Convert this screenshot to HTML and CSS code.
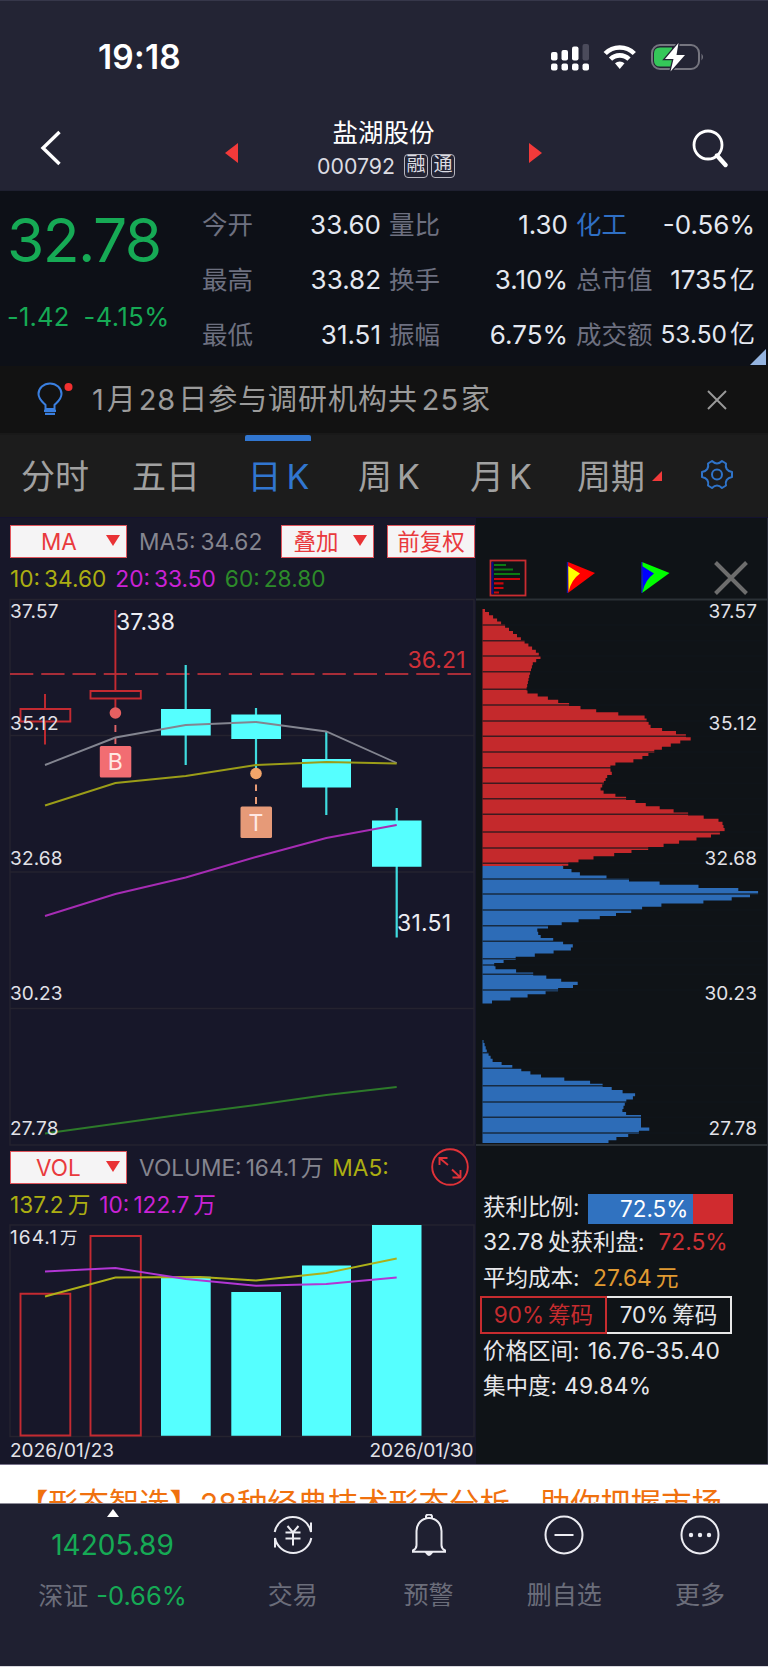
FILE: index.html
```html
<!DOCTYPE html>
<html lang="zh-CN">
<head>
<meta charset="utf-8">
<title>盐湖股份 000792</title>
<link rel="stylesheet" href="styles.css">
</head>
<body>
<div class="app">
  <header class="top">
    <div class="status">
      <span class="time">19:18</span>
      <svg class="status-icons" width="156" height="30" viewBox="0 0 156 30">
        <g fill="#fff">
          <rect x="1" y="10" width="6.5" height="8.5" rx="2"/><rect x="11.500" y="8" width="6.500" height="10.500" rx="2"/><rect x="22" y="4.500" width="6.500" height="14" rx="2"/>
          <rect x="32.500" y="2" width="6.500" height="16.500" rx="2" fill="#4b4b5b"/>
          <rect x="1" y="21.500" width="6.500" height="7" rx="2"/><rect x="11.500" y="21.500" width="6.500" height="7" rx="2"/><rect x="22" y="21.500" width="6.500" height="7" rx="2"/><rect x="32.500" y="21.500" width="6.500" height="7" rx="2"/>
          <path d="M65 21.300a7 7 0 0 1 9.500 0L69.750 27z"/>
        </g>
        <path d="M55.200 11.500a20.500 20.500 0 0 1 29.100 0M60.500 17.200a13 13 0 0 1 18.500 0" fill="none" stroke="#fff" stroke-width="4.600"/>
        <rect x="102" y="3" width="47" height="24" rx="8" fill="none" stroke="#75757f" stroke-width="2"/>
        <path d="M151.500 11.500q3 3.500 0 7z" fill="#75757f"/>
        <path d="M110 5.500h12v19h-12q-6 0-6-6v-7q0-6 6-6z" fill="#35c759"/>
        <path d="M128.500 1 115 17h8.500l-3 12.500L135 13h-8.500z" fill="#fff" stroke="#232434" stroke-width="2.600" paint-order="stroke"/>
      </svg>
    </div>
    <div class="nav">
      <svg class="back" width="24" height="38" viewBox="0 0 24 38"><path d="M20.500 3 4 19l16.500 16" fill="none" stroke="#fff" stroke-width="3.400"/></svg>
      <svg class="prev" width="13" height="20" viewBox="0 0 13 20"><path d="M13 0v20L0 10z" fill="#f23a3a"/></svg>
      <div class="title">
        <h1>盐湖股份</h1>
        <div class="code"><span>000792</span><i>融</i><i>通</i></div>
      </div>
      <svg class="next" width="13" height="20" viewBox="0 0 13 20"><path d="M0 0v20l13-10z" fill="#f23a3a"/></svg>
      <svg class="search" width="38" height="40" viewBox="0 0 38 40"><circle cx="17" cy="17" r="14" fill="none" stroke="#fff" stroke-width="2.800"/><path d="M26 27.500 34.500 37" stroke="#fff" stroke-width="4.400" stroke-linecap="round"/></svg>
    </div>
  </header>

  <section class="quote">
    <div class="price"><b>32.78</b><p><span>-1.42</span><span>-4.15%</span></p></div>
    <dl class="col c1"><div><dt>今开</dt><dd>33.60</dd></div><div><dt>最高</dt><dd>33.82</dd></div><div><dt>最低</dt><dd>31.51</dd></div></dl>
    <dl class="col c2"><div><dt>量比</dt><dd>1.30</dd></div><div><dt>换手</dt><dd>3.10%</dd></div><div><dt>振幅</dt><dd>6.75%</dd></div></dl>
    <dl class="col c3"><div><dt class="blue">化工</dt><dd>-0.56%</dd></div><div><dt>总市值</dt><dd>1735<em>亿</em></dd></div><div><dt>成交额</dt><dd class="small">53.50<em>亿</em></dd></div></dl>
    <svg class="corner" width="16" height="16" viewBox="0 0 16 16"><path d="M16 0v16H0z" fill="#94b4e0"/></svg>
  </section>

  <section class="notice">
    <svg width="40" height="36" viewBox="0 0 40 36"><path d="M10.500 27v-4C7 19.500 3.500 17 3.500 12a11.500 10.500 0 0 1 23 0c0 5-3.500 7.500-7 11v4z" fill="none" stroke="#3a7fe0" stroke-width="2"/><path d="M9 28.800h12M10 31.800h10" stroke="#3a7fe0" stroke-width="2.200"/><circle cx="33.500" cy="5" r="4" fill="#f23030"/></svg>
    <p>1<s></s>月<s></s>28<s></s>日参与调研机构共<s class="w"></s>25<s></s>家</p>
    <svg class="x" width="20" height="20" viewBox="0 0 20 20"><path d="M1 1l18 18M19 1 1 19" stroke="#9a9a9a" stroke-width="1.900"/></svg>
  </section>

  <nav class="tabs">
    <a>分时</a><a>五日</a><a class="on">日<s></s>K</a><a>周<s></s>K</a><a>月<s></s>K</a><a>周期</a>
    <svg class="tri" width="10" height="10" viewBox="0 0 10 10"><path d="M10 0v10H0z" fill="#f23a3a"/></svg>
    <svg class="gear" width="34" height="32" viewBox="0 0 34 32" fill="none" stroke="#2f73c8" stroke-width="2" stroke-linejoin="round"><path d="M12 2Q17 7 22 2L26 4.500Q24.500 11.500 32 13V18Q24.500 19.500 26 26.500L22 29Q17 24 12 29L8 26.500Q9.500 19.500 2 18V13Q9.500 11.500 8 4.500Z"/><circle cx="17" cy="15.500" r="5"/></svg>
  </nav>

  <main class="charts">
    <section class="left">
      <div class="legend">
        <div class="line"><button class="sel ma">MA<i></i></button><span class="gray ma5">MA5:<s></s>34.62</span><button class="sel add">叠加<i></i></button><button class="sel adj">前复权</button></div>
        <div class="line two"><span class="yellow">10:<s></s>34.60</span><span class="mag">20:<s></s>33.50</span><span class="green">60:<s></s>28.80</span></div>
      </div>
      <svg class="kline" width="476" height="548" viewBox="0 598 476 548">
        <g fill="none" stroke="#25232f" stroke-width="1.500"><path d="M10 599.500H474V1145H10zM10 735.500H474M10 872H474M10 1008.500H474"/></g>
        <path d="M10 674H471" stroke="#a82d38" stroke-width="2" stroke-dasharray="23.300 7.950"/>
        <g fill="none" stroke="#c42a31" stroke-width="1.900"><path d="M20.500 709H70.300V721.500H20.500zM45 694V709M45 721.500V744.500M90.500 691H140.800V698.500H90.500zM115.400 610V691M115.400 698.500V713"/><path d="M115.400 725v7M115.400 737v7" stroke="#e06468"/></g>
        <path d="M185.700 665V765M256 708V773M326.300 732V815M396.700 808V937.500" stroke="#3fdcdf" stroke-width="2.200"/>
        <g fill="#55ffff"><path d="M161 709h49.700v26.500H161zM231.300 714.500H281v24.500h-49.700zM302 759h49v28.500h-49zM372 820.500h49.500v46.300H372z"/></g>
        <path d="M256 784.500v6.500M256 797v7" stroke="#e89b76" stroke-width="2"/>
        <g fill="none" stroke-width="1.900">
          <path d="M45 765 115.400 737.500 185.700 725 256 722 326.300 731.500 396.700 763" stroke="#838590"/>
          <path d="M45 805.500 115.400 783 185.700 776 256 765 326.300 762 396.700 763.500" stroke="#9b9d18"/>
          <path d="M45 916 115.400 894 185.700 877.500 256 857 326.300 838 396.700 825" stroke="#a62cb4"/>
          <path d="M45 1133.500 115.400 1123.700 185.700 1114 256 1105 326.300 1095 396.700 1087" stroke="#2d7a2a"/>
        </g>
        <circle cx="115.400" cy="713" r="5.800" fill="#e66061"/><circle cx="256" cy="773.500" r="5.800" fill="#f2a56a"/>
        <rect x="99.800" y="746" width="31.500" height="31.500" rx="1.500" fill="#f26d72"/><rect x="240.500" y="806.500" width="31.500" height="31.500" rx="1.500" fill="#e69a78"/>
        <g class="mark"><text x="115.400" y="770">B</text><text x="256" y="830.500">T</text></g>
        <g class="axis"><text x="10" y="618" textLength="48.500">37.57</text><text x="10" y="730" textLength="48.500">35.12</text><text x="10" y="865" textLength="52.500">32.68</text><text x="10" y="1000" textLength="52.500">30.23</text><text x="10" y="1135" textLength="48.500">27.78</text></g>
        <g class="val"><text x="116" y="630" textLength="59">37.38</text><text x="397" y="931" textLength="54">31.51</text><text x="407.500" y="668" textLength="58" fill="#d03038">36.21</text></g>
      </svg>
      <div class="legend vol">
        <div class="line"><button class="sel ma">VOL<i></i></button><span class="gray vm">VOLUME:<s></s>164.1<s></s>万</span><span class="yellow m5">MA5:</span>
          <svg class="expand" width="38" height="38" viewBox="0 0 38 38" fill="none" stroke="#e03238" stroke-width="1.900"><circle cx="19" cy="19" r="17.800"/><path d="M17 17 8.500 10M8.500 17V10H16.500M21 21.500l8 7.500M21.500 29.500h8V22"/></svg></div>
        <div class="line two"><span class="yellow v1">137.2<s></s>万</span><span class="mag v2">10:<s></s>122.7<s></s>万</span></div>
      </div>
      <svg class="volume" width="476" height="241" viewBox="0 1223 476 241">
        <path d="M10 1225H474V1436.500H10z" fill="none" stroke="#25232f" stroke-width="1.500"/>
        <path d="M20.500 1293.700H70.300V1435.500H20.500zM90.500 1236H140.800V1435.500H90.500z" fill="none" stroke="#c42a31" stroke-width="1.900"/>
        <path d="M161 1276.700h49.700v159H161zM231.300 1292H281v143.700h-49.700zM302 1265.500h49v170.200h-49zM372 1225h49.500v210.700H372z" fill="#55ffff"/>
        <g fill="none" stroke-width="1.900"><path d="M45 1296.500 115.400 1277.500 200 1277 256 1280.500 326.300 1273 396.700 1258.500" stroke="#adb019"/><path d="M45 1271.500 115.400 1268 185.700 1279 256 1285.700 326.300 1284 396.700 1277.500" stroke="#b236d4"/></g>
        <g class="axis"><text x="10" y="1243.500" textLength="47">164.1</text><text x="60" y="1243.500" font-size="17.500">万</text></g>
        <g class="axis date"><text x="10" y="1457" textLength="104">2026/01/23</text><text x="369.500" y="1457" textLength="104">2026/01/30</text></g>
      </svg>
    </section>

    <section class="right">
      <svg class="chips" width="292" height="629" viewBox="476 518 292 629">
        <rect x="490.500" y="560.500" width="35" height="35" fill="none" stroke="#c92c31" stroke-width="1.800"/>
        <path d="M492.500 562V594" stroke="#0a0a85" stroke-width="2"/>
        <path d="M494 565h12M494 569.500h19M494 574h26" stroke="#0c7a12" stroke-width="2.200"/><path d="M494 579h26M494 583.300h9.500M494 588h9.500M494 592.500h5" stroke="#c9060c" stroke-width="2.200"/>
        <path d="M568 562 595 573 568 593z" fill="#f00"/><path d="M568 566 580 573.500Q571 580 568.500 592z" fill="#ff0"/><path d="M567.500 562v31" stroke="#1616a0" stroke-width="1.400"/>
        <path d="M642 562 669.500 573 642 593z" fill="#0f0"/><path d="M642 566 654 573.500Q645 580 642.500 592z" fill="#00f"/><path d="M641.800 562v31" stroke="#1616a0" stroke-width="1.400"/>
        <path d="M715.500 562.500 746.500 593.500M746.500 562.500 715.500 593.500" stroke="#6d6d6d" stroke-width="4"/>
        <path d="M476 599.500h292M476 1145h292" stroke="#2b3136" stroke-width="2"/>
        <path id="chip-red" fill="#c4292c"/><path id="chip-blue" fill="#2d6cb7"/>
        <path id="chip-lines" stroke="#10151b" stroke-opacity=".75" stroke-width="1.600"/>
        <g class="axis"><text x="708.500" y="617.800" textLength="48.500">37.57</text><text x="708.500" y="730" textLength="48.500">35.12</text><text x="704.500" y="865" textLength="52.500">32.68</text><text x="704.500" y="1000" textLength="52.500">30.23</text><text x="708.500" y="1135" textLength="48.500">27.78</text></g>
      </svg>
      <div class="cost">
        <p><span class="lb">获利比例:</span><span class="ratio"><b>72.5%</b><u></u></span></p>
        <p><span class="num">32.78</span><s></s>处获利盘:<span class="num red">72.5%</span></p>
        <p><span class="lb">平均成本:</span><span class="num orange">27.64<s></s>元</span></p>
        <div class="switch"><span class="on">90%<s></s>筹码</span><span>70%<s></s>筹码</span></div>
        <p><span class="lb">价格区间:</span><span class="num range">16.76-35.40</span></p>
        <p><span>集中度:</span><span class="num conc">49.84%</span></p>
      </div>
    </section>
  </main>

  <section class="banner"><p>【形态智选】28种经典技术形态分析，助你把握市场</p></section>

  <footer class="bottom">
    <div class="index"><svg width="12" height="8" viewBox="0 0 12 8"><path d="M6 0l6 8H0z" fill="#fff"/></svg><b>14205.89</b><p>深证<span>-0.66%</span></p></div>
    <a><svg width="42" height="42" viewBox="0 0 42 42" fill="none" stroke="#ececf2" stroke-width="2"><path d="M2.700 18A18.500 18.500 0 0 1 39 18V8.500M39.300 24A18.500 18.500 0 0 1 3 24V33.500M15.500 12 21 18.500 26.500 12M21 18v13.500M13.500 18.500h15M13.500 24.500h15"/></svg>交易</a>
    <a><svg width="42" height="42" viewBox="0 0 42 42" fill="none" stroke="#ececf2" stroke-width="2"><path d="M5 37.800v-1.500q3.500-1.500 3.500-5V17a12.500 13 0 0 1 25 0v14.300q0 3.500 3.500 5v1.500zM18 5V2.500q0-2 3-2t3 2V5"/><path d="M18.500 39h5q-2.500 4-5 0z" fill="#ececf2"/></svg>预警</a>
    <a><svg width="42" height="42" viewBox="0 0 42 42" fill="none" stroke="#ececf2" stroke-width="2"><circle cx="21" cy="21" r="18.500"/><path d="M11.500 21h19"/></svg>删自选</a>
    <a><svg width="42" height="42" viewBox="0 0 42 42" fill="none" stroke="#ececf2" stroke-width="2"><circle cx="21" cy="21" r="18.500"/><g fill="#ececf2" stroke="none"><circle cx="12" cy="21" r="2.200"/><circle cx="21" cy="21" r="2.200"/><circle cx="30" cy="21" r="2.200"/></g></svg>更多</a>
  </footer>
</div>
<script src="chips.js"></script>
</body>
</html>
```
FILE: styles.css
```css
* { box-sizing: border-box; margin: 0; padding: 0; }
body { width: 768px; background: #1f2031; font-family: Inter, "Noto Sans CJK SC", sans-serif; color: #e6e6ea; }
svg { display: block; flex: none; }
s { display: inline-block; width: 5px; text-decoration: none; }
i, em { font-style: normal; }
.app { width: 768px; height: 1667px; overflow: hidden; display: flex; flex-direction: column; white-space: nowrap; border-bottom: 1px solid #d8d8de; }
.app > * { flex: none; }

.top { height: 191px; background: #232434; border-top: 1px solid #36374a; border-bottom: 1px solid #1e2030; }
.status { height: 111px; display: flex; padding: 40px 62px 0 98px; justify-content: space-between; }
.time { font-size: 33.500px; line-height: 32px; font-weight: 600; color: #fff; letter-spacing: .2px; }
.status-icons { margin-top: 1px; }
.nav { display: flex; height: 78px; }
.back { margin: 17px 0 0 39px; }
.prev { margin: 31px 0 0 162px; }
.title { width: 291px; text-align: center; color: #fff; }
.title h1 { font-size: 25.500px; line-height: 34px; font-weight: 400; margin-top: 4px; }
.code { display: flex; justify-content: center; margin-top: 4px; padding-left: 8px; font-size: 21.300px; line-height: 24px; color: #dcdce2; }
.code span { margin-right: 9px; }
.code i { width: 24px; height: 24px; border: 1.500px solid #b7b7c0; border-radius: 4px; font-size: 19px; line-height: 20px; margin-right: 3px; }
.next { margin-top: 31px; }
.search { margin: 16px 0 0 149px; }

.quote { height: 175px; background: #0d1017; display: flex; position: relative; }
.price { width: 202px; padding-left: 7px; color: #16aa55; }
.price b { display: block; font-weight: 400; font-size: 60.500px; line-height: 70px; margin-top: 14px; letter-spacing: -1.600px; }
.price p { font-size: 25.500px; line-height: 30px; margin-top: 27px; display: flex; gap: 14px; }
.price p span { letter-spacing: .2px; }
.price p span + span { letter-spacing: .5px; }
.col { padding-top: 6px; }
.col div { display: flex; justify-content: space-between; height: 55px; line-height: 55px; align-items: center; }
.c1, .c2, .c3 { width: 179px; }
.c2, .c3 { margin-left: 8px; }
dt { font-size: 25.500px; color: #6d7080; }
dt.blue { color: #2f6fc4; }
dd { font-size: 26px; color: #e4e8f0; }
dd em { margin-left: 3px; font-size: 25px; }
dd.small { font-size: 24.500px; }
.corner { position: absolute; right: 2px; bottom: 1px; }

.notice { height: 67px; background: #121212; display: flex; align-items: center; padding: 0 41px 0 35px; }
.notice p { flex: 1; margin-left: 17px; font-size: 29px; line-height: 60px; letter-spacing: .95px; color: #9b9b9b; }
.notice s { width: 2px; }
.notice .w { width: 4px; }

.tabs { height: 84px; background: #1c1c1c; border-top: 2px solid #191919; display: flex; align-items: center; position: relative; color: #a1a1a1; font-size: 34px; }
.tabs a { height: 82px; line-height: 84px; text-align: center; }
.tabs a:nth-child(1) { margin-left: 20px; width: 70px; }
.tabs a:nth-child(2) { margin-left: 41px; width: 70px; }
.tabs .on { margin-left: 44px; width: 66px; color: #3176d0; border-top: 6px solid #3176d0; line-height: 72px; border-radius: 2px; padding-left: 1px; }
.tabs a:nth-child(4) { margin-left: 45px; width: 66px; }
.tabs a:nth-child(5) { margin-left: 46px; width: 66px; }
.tabs a:nth-child(6) { margin-left: 42px; width: 70px; }
.tabs s { width: 5px; }
.tri { margin: 0 0 0 6px; }
.gear { margin-left: 38px; margin-top: -2px; }

.charts { display: flex; height: 948px; background: #171729; border-top: 1px solid #141230; border-bottom: 1px solid #77728a; }
.left { width: 476px; }
.legend { height: 80px; padding: 7px 0 0 10px; }
.line { display: flex; height: 33px; align-items: center; font-size: 22.700px; line-height: 33px; }
.line.two { margin-top: 2px; height: 36px; }
.sel { font: 400 22.500px/28px Inter, "Noto Sans CJK SC", sans-serif; color: #e93a3d; background: #f5f4f5; border: 1px solid #e0555c; height: 33px; display: flex; align-items: center; justify-content: center; }
.sel i { border: 7px solid transparent; border-top: 11px solid #e93235; border-bottom: 0; margin-top: -3px; }
.sel.ma { width: 117px; justify-content: flex-start; padding-left: 30px; }
.sel.ma i { margin-left: auto; margin-right: 6px; }
.vol .sel.ma { padding-left: 25px; }
.ma5 { margin-left: 12px; width: 142px; }
.sel.add { width: 93px; gap: 14px; padding-left: 5px; }
.sel.adj { width: 88px; margin-left: 13px; }
.gray { color: #85858f; }
.yellow { color: #acae12; }
.mag { color: #cb22d6; }
.green { color: #2d8b2a; }
.two .mag { margin-left: 9px; }
.two .green { margin-left: 9px; }
.two s { width: 4px; }
.vol { height: 77px; padding-top: 5px; }
.vol s { width: 4px; }
.vm { margin-left: 12px; }
.m5 { margin-left: 9px; }
.expand { margin-left: auto; margin-right: 7px; margin-top: -1px; }
.axis { font-size: 19px; fill: #e2e2e8; }
.val { font-size: 23px; fill: #ececf2; }
.mark { font-size: 23px; fill: #ffe8e4; text-anchor: middle; }

.right { width: 292px; background: #0f1317; border-right: 1px solid #292c38; }
.cost { padding: 42px 0 0 7px; font-size: 22.500px; color: #e6e7ea; }
.cost p { height: 35.300px; line-height: 35.300px; display: flex; align-items: baseline; }
.lb { width: 105px; }
.num { font-size: 22.800px; }
.ratio { align-self: flex-start; margin-top: 5px; width: 145px; height: 30px; line-height: 30px; background: #3072c0; display: flex; justify-content: space-between; align-items: center; padding-left: 32px; color: #fff; }
.ratio b { font-weight: 400; }
.ratio u { width: 40px; height: 30px; background: #d02b2f; }
.red { margin-left: 14px; color: #cf3135; }
.orange { margin-left: 5px; color: #e09a32; }
.cost s { width: 4px; }
.switch { display: flex; width: 252px; height: 38px; line-height: 34px; margin: 1px 0 -1px -3px; }
.switch span { flex: 1; border: 2px solid #e8e8e8; border-left: 0; display: flex; align-items: center; justify-content: center; }
.switch .on { color: #c62c2f; border: 2px solid #c62c2f; }
.range { letter-spacing: .3px; }
.conc { margin-left: 7px; letter-spacing: .3px; }

.banner { height: 39px; background: #fff; overflow: hidden; color: #f0710e; border-bottom: 1px solid #8d8c98; }
.banner p { font-size: 30.300px; line-height: 36px; margin: 21px 0 0 18px; }

.bottom { height: 163px; background: #1f2031; display: flex; }
.index { width: 225px; display: flex; flex-direction: column; align-items: center; padding-top: 5px; color: #16aa55; }
.index b { font-weight: 400; font-size: 28px; line-height: 32px; margin-top: 12px; }
.index p { font-size: 25px; line-height: 36px; margin-top: 17px; color: #6b6d7a; }
.index span { color: #16aa55; margin-left: 8px; font-size: 25.500px; }
.bottom a { width: 135.700px; display: flex; flex-direction: column; align-items: center; padding-top: 10px; font-size: 25px; line-height: 36px; color: #6b6d7a; }
.bottom a svg { margin-bottom: 21px; }
```
FILE: chips.js
```js
// Chip distribution profile: [bar end x, price-axis y] key points per zone.
const LEFT = 482.5, STEP = 3.13;
const red = [[483,609],[501,623],[520,638],[538,653],[540.5,657.5],[533,663],[529,677],[526,691.5],[562,702.5],[582,708],[608,713],[644,716],[651,727],[682,734],[692,738.5],[677,743],[657,750],[638,760],[615,764],[609,768],[612.5,773],[608,775],[599.5,791],[622,797],[643,804],[683,813],[718,820],[722,822],[725,831],[708,837],[680,842],[643,849.5],[607,856],[585,859],[562,866]];
const blue = [[559,866],[583,875],[607,877],[632,880.5],[657,883],[681,885],[707,887],[733,889],[761,891.5],[748,896.5],[717,901],[676,904],[650,906],[629,912],[598,918],[570,922],[546,927.5],[537,929],[539,936],[555,940],[570,945],[578.5,947.5],[560,951],[530,956],[517,958],[505,961],[493,965],[494,967.5],[527,972.5],[550,978],[570,982],[584,984.5],[562,988.5],[550,992],[527,996],[505,1000],[493,1002],[483,1003.5]];
const low = [[483,1040],[487,1051.5],[493,1061],[512,1066.5],[538,1075.5],[553,1078],[573,1080],[592,1082.5],[600,1084.5],[616,1090],[632,1094],[640,1096],[627,1099.5],[624,1106],[622,1111.5],[627,1114],[641,1115.5],[641,1126.5],[650,1129],[640,1132],[630,1135],[613,1139.5],[606,1143]];

function stepped(pts) {
  let d = `M${LEFT} ${pts[0][1]}`;
  const end = pts[pts.length - 1][1];
  for (let y = pts[0][1]; y < end; y += STEP) {
    const mid = Math.min(y + STEP / 2, end);
    let k = 1;
    while (k < pts.length - 1 && pts[k][1] < mid) k++;
    const [x0, y0] = pts[k - 1], [x1, y1] = pts[k];
    const x = x0 + (x1 - x0) * (mid - y0) / (y1 - y0);
    d += `V${y.toFixed(1)}H${x.toFixed(1)}`;
  }
  return d + `V${end}H${LEFT}z`;
}
document.getElementById('chip-red').setAttribute('d', stepped(red));
document.getElementById('chip-blue').setAttribute('d', stepped(blue) + stepped(low));

const rows = [625,640.7,656,671.7,689.3,705,721,736.3,752,767.7,783.3,798.7,814.3,832,848,863.3,879,894,910,925.7,941.3,958.7,965,974.3,990,1052.7,1068.3,1085.7,1102,1117.3,1133];
document.getElementById('chip-lines').setAttribute('d', rows.map(y => `M${LEFT} ${y}H764`).join(''));
```
